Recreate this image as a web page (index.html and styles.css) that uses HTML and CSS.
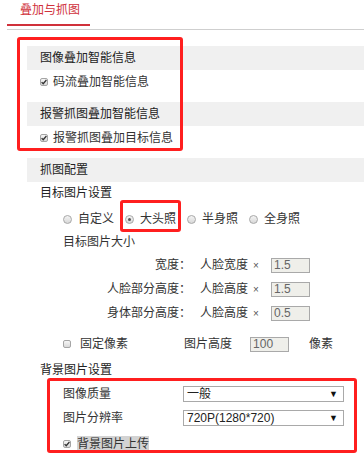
FILE: index.html
```html
<!DOCTYPE html>
<html lang="zh-CN">
<head>
    <meta charset="UTF-8">
    <meta name="viewport" content="width=device-width, initial-scale=1.0">
    <title>叠加与抓图</title>
    <link rel="stylesheet" href="styles.css">
</head>
<body>
<div class="page">
    <!-- tab -->
    <div class="tabs">
        <span class="tab active">叠加与抓图</span>
    </div>

    <div class="content">
        <div class="sec-head">图像叠加智能信息</div>
        <div class="check-row">
            <span class="cb checked"><svg width="8" height="8" viewBox="0 0 8 8"><path d="M1.6 4.1 L3.2 5.7 L6.4 2" fill="none" stroke="#333" stroke-width="1.3"/></svg></span>
            <span class="cb-text">码流叠加智能信息</span>
        </div>

        <div class="sec-head">报警抓图叠加智能信息</div>
        <div class="check-row">
            <span class="cb checked"><svg width="8" height="8" viewBox="0 0 8 8"><path d="M1.6 4.1 L3.2 5.7 L6.4 2" fill="none" stroke="#333" stroke-width="1.3"/></svg></span>
            <span class="cb-text">报警抓图叠加目标信息</span>
        </div>

        <div class="sec-head">抓图配置</div>
        <div class="sub-title">目标图片设置</div>
        <div class="radio-row">
            <span class="radio"></span><span class="radio-text">自定义</span>
            <span class="radio on"></span><span class="radio-text">大头照</span>
            <span class="radio"></span><span class="radio-text">半身照</span>
            <span class="radio"></span><span class="radio-text">全身照</span>
        </div>
        <div class="size-title">目标图片大小</div>

        <div class="size-row">
            <span class="size-label">宽度：</span>
            <span class="size-base">人脸宽度</span>
            <span class="times">×</span>
            <input class="num" type="text" value="1.5" readonly>
        </div>
        <div class="size-row">
            <span class="size-label">人脸部分高度：</span>
            <span class="size-base">人脸高度</span>
            <span class="times">×</span>
            <input class="num" type="text" value="1.5" readonly>
        </div>
        <div class="size-row">
            <span class="size-label">身体部分高度：</span>
            <span class="size-base">人脸高度</span>
            <span class="times">×</span>
            <input class="num" type="text" value="0.5" readonly>
        </div>

        <div class="fixed-row">
            <span class="cb"></span>
            <span class="fixed-text">固定像素</span>
            <span class="pic-h">图片高度</span>
            <input class="num" type="text" value="100" readonly>
            <span class="unit">像素</span>
        </div>

        <div class="sub-title bg-title">背景图片设置</div>
        <div class="select-row">
            <span class="sel-label">图像质量</span>
            <div class="select"><span>一般</span><span class="arrow">▼</span></div>
        </div>
        <div class="select-row">
            <span class="sel-label">图片分辨率</span>
            <div class="select"><span>720P(1280*720)</span><span class="arrow">▼</span></div>
        </div>
        <div class="upload-row">
            <span class="cb checked"><svg width="8" height="8" viewBox="0 0 8 8"><path d="M1.6 4.1 L3.2 5.7 L6.4 2" fill="none" stroke="#333" stroke-width="1.3"/></svg></span>
            <span class="upload-text">背景图片上传</span>
        </div>
    </div>

    <!-- rode markeringen -->
    <div class="mark mark-1"></div>
    <div class="mark mark-2"></div>
    <div class="mark mark-3"></div>
</div>
</body>
</html>
```

FILE: styles.css
```css
body {
    margin: 0;
    background: #fff;
    font-family: "Liberation Sans", "Noto Sans CJK SC", sans-serif;
    font-size: 12px;
    color: #333;
}
.page {
    position: relative;
    width: 364px;
    height: 461px;
    overflow: hidden;
}
.tabs {
    margin-left: 7px;
    padding-bottom: 3px;
    border-bottom: 1px solid #cfcfcf;
}
.tab {
    display: inline-block;
    line-height: 20px;
    padding: 0 10px 4px 13px;
    color: #d0313b;
    border-bottom: 2px solid #d0313b;
}
.content {
    padding-left: 27px;
    padding-top: 16px;
}
.sec-head {
    height: 24px;
    line-height: 24px;
    padding-left: 13px;
    background: #f0f0f0;
    color: #222;
}
.check-row {
    height: 24px;
    display: flex;
    align-items: center;
    padding-left: 13px;
    margin-bottom: 8px;
}
.cb {
    display: inline-flex;
    align-items: center;
    justify-content: center;
    box-sizing: border-box;
    width: 8px;
    height: 8px;
    border: 1px solid #a5a5a5;
    border-radius: 2px;
    background: linear-gradient(#f6f6f6, #d9d9d9);
    flex-shrink: 0;
}
.cb svg {
    width: 8px;
    height: 8px;
    flex-shrink: 0;
}
.cb-text {
    margin-left: 5px;
    line-height: 16px;
}
.sub-title {
    height: 22px;
    line-height: 22px;
    padding-left: 13px;
    color: #222;
}
.radio-row {
    height: 30px;
    display: flex;
    align-items: center;
    padding-left: 36px;
}
.radio {
    box-sizing: border-box;
    width: 9px;
    height: 9px;
    border: 1px solid #a8a8a8;
    border-radius: 50%;
    background: linear-gradient(#f4f4f4, #d8d8d8);
    position: relative;
}
.radio.on::after {
    content: "";
    position: absolute;
    left: 2px;
    top: 2px;
    width: 3px;
    height: 3px;
    border-radius: 50%;
    background: #555;
}
.radio-text {
    margin-left: 6px;
    margin-right: 11px;
    line-height: 16px;
}
.size-title {
    height: 16px;
    line-height: 16px;
    padding-left: 36px;
    margin-bottom: 3px;
}
.size-row {
    height: 24px;
    display: flex;
    align-items: center;
}
.size-label {
    width: 164px;
    text-align: right;
    line-height: 16px;
}
.size-base {
    margin-left: 9px;
    width: 48px;
    line-height: 16px;
}
.times {
    width: 18px;
    padding-left: 5px;
    font-size: 10px;
    color: #555;
}
.num {
    box-sizing: border-box;
    width: 39px;
    height: 15px;
    padding: 0 2px;
    border: 1px solid #a9a9a9;
    background: #efefea;
    color: #666;
    font-family: "Liberation Sans", sans-serif;
    font-size: 12px;
    outline: none;
}
.fixed-row {
    height: 24px;
    display: flex;
    align-items: center;
    padding-left: 36px;
    margin-top: 7px;
}
.fixed-text {
    margin-left: 9px;
    line-height: 16px;
}
.pic-h {
    margin-left: 56px;
    margin-right: 18px;
    line-height: 16px;
}
.unit {
    margin-left: 20px;
    line-height: 16px;
}
.bg-title {
    height: 24px;
    line-height: 24px;
    margin-top: 2px;
}
.select-row {
    height: 24px;
    display: flex;
    align-items: center;
    padding-left: 36px;
}
.sel-label {
    width: 120px;
    line-height: 16px;
}
.select {
    box-sizing: border-box;
    width: 161px;
    height: 16px;
    border: 1px solid #a9a9a9;
    background: #fff;
    display: flex;
    align-items: center;
    justify-content: space-between;
    padding: 0 5px 0 3px;
    line-height: 14px;
    color: #222;
}
.arrow {
    font-size: 9px;
    color: #111;
}
.upload-row {
    height: 24px;
    display: flex;
    align-items: center;
    padding-left: 36px;
    margin-top: 2px;
}
.upload-text {
    margin-left: 6px;
    line-height: 16px;
    background: #d3d3d3;
}
.mark {
    position: absolute;
    box-sizing: border-box;
    border: 3px solid #ff1f1f;
    border-radius: 3px;
}
.mark-1 {
    left: 17px;
    top: 37px;
    width: 166px;
    height: 114px;
}
.mark-2 {
    left: 120px;
    top: 200px;
    width: 61px;
    height: 32px;
}
.mark-3 {
    left: 47px;
    top: 378px;
    width: 310px;
    height: 75px;
}
```
